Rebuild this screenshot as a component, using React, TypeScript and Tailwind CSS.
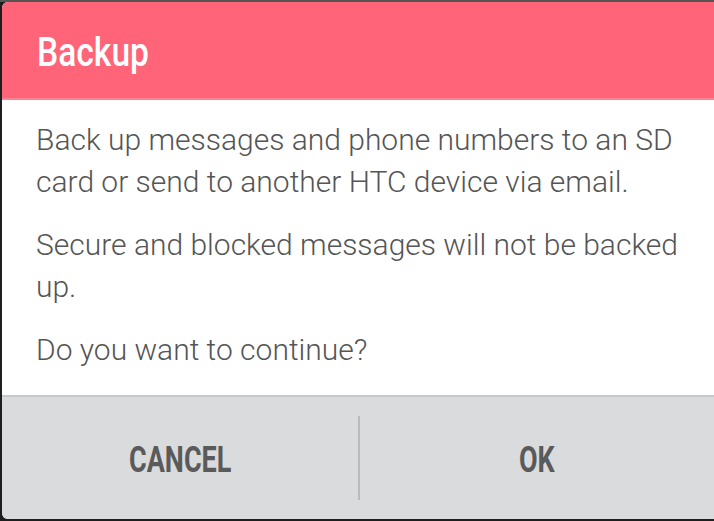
const paragraphs = [
  "Back up messages and phone numbers to an SD card or send to another HTC device via email.",
  "Secure and blocked messages will not be backed up.",
  "Do you want to continue?",
];

export default function App() {
  return (
    <div className="w-[714px] h-[521px] overflow-hidden bg-[#1e1e1e] border-t-2 border-[#555555] pl-[2px] pb-[2px]">
      <div className="flex h-full flex-col overflow-hidden rounded-l-[6px] bg-white">
        <div className="h-[98px] shrink-0 border-b-2 border-[#ff8293] bg-[#ff6479] px-[35px] pt-[23px]">
          <h1
            className="origin-left scale-x-[0.84] text-[40px] leading-[56px] font-medium text-white"
            style={{ fontFamily: "Roboto, 'Noto Sans', sans-serif" }}
          >
            Backup
          </h1>
        </div>
        <div
          className="flex flex-1 flex-col gap-[21px] pl-[34px] pr-[20px] pt-[19px] text-[30px] leading-[42px] font-light text-[#555555]"
          style={{ fontFamily: "Roboto, 'Noto Sans', sans-serif" }}
        >
          {paragraphs.map((p) => (
            <p key={p}>{p}</p>
          ))}
        </div>
        <div className="flex h-[124px] shrink-0 items-center border-t-2 border-[#c8c9cb] bg-[#dadbdd]">
          {["CANCEL", "OK"].map((label, i) => (
            <div key={label} className="flex h-full flex-1 items-center">
              {i > 0 && <div className="h-[84px] w-[2px] bg-[#b9babc]" />}
              <button
                className="flex h-full flex-1 items-center justify-center pt-[4px]"
                style={{ fontFamily: "Roboto, 'Noto Sans', sans-serif" }}
              >
                <span className="scale-x-[0.75] text-[36px] font-bold text-[#5a5a5a]">
                  {label}
                </span>
              </button>
            </div>
          ))}
        </div>
      </div>
    </div>
  );
}
